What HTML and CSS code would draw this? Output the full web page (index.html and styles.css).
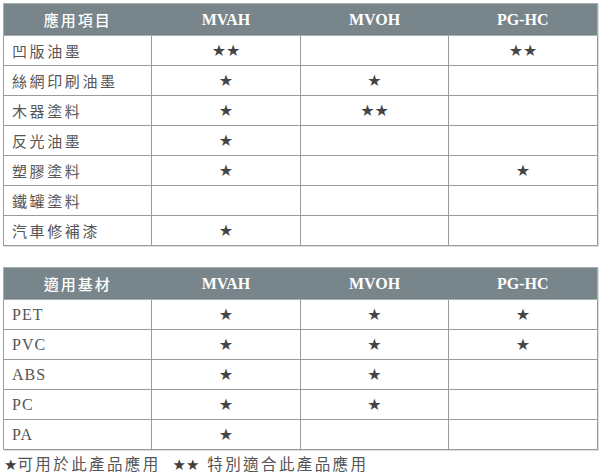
FILE: index.html
```html
<!DOCTYPE html>
<html lang="zh-Hant">
<head>
<meta charset="utf-8">
<title>應用項目</title>
<link rel="stylesheet" href="styles.css">
</head>
<body>
<div class="page">
  <table class="grid">
    <colgroup><col class="c1"><col class="c2"><col class="c3"><col class="c4"></colgroup>
    <thead>
      <tr><th class="zh">應用項目</th><th>MVAH</th><th>MVOH</th><th>PG-HC</th></tr>
    </thead>
    <tbody>
      <tr><td class="zh">凹版油墨</td><td class="star">★★</td><td class="star"></td><td class="star">★★</td></tr>
      <tr><td class="zh">絲網印刷油墨</td><td class="star">★</td><td class="star">★</td><td class="star"></td></tr>
      <tr><td class="zh">木器塗料</td><td class="star">★</td><td class="star">★★</td><td class="star"></td></tr>
      <tr><td class="zh">反光油墨</td><td class="star">★</td><td class="star"></td><td class="star"></td></tr>
      <tr><td class="zh">塑膠塗料</td><td class="star">★</td><td class="star"></td><td class="star">★</td></tr>
      <tr><td class="zh">鐵罐塗料</td><td class="star"></td><td class="star"></td><td class="star"></td></tr>
      <tr><td class="zh">汽車修補漆</td><td class="star">★</td><td class="star"></td><td class="star"></td></tr>
    </tbody>
  </table>

  <table class="grid second">
    <colgroup><col class="c1"><col class="c2"><col class="c3"><col class="c4"></colgroup>
    <thead>
      <tr><th class="zh">適用基材</th><th>MVAH</th><th>MVOH</th><th>PG-HC</th></tr>
    </thead>
    <tbody>
      <tr><td class="en">PET</td><td class="star">★</td><td class="star">★</td><td class="star">★</td></tr>
      <tr><td class="en">PVC</td><td class="star">★</td><td class="star">★</td><td class="star">★</td></tr>
      <tr><td class="en">ABS</td><td class="star">★</td><td class="star">★</td><td class="star"></td></tr>
      <tr><td class="en">PC</td><td class="star">★</td><td class="star">★</td><td class="star"></td></tr>
      <tr><td class="en">PA</td><td class="star">★</td><td class="star"></td><td class="star"></td></tr>
    </tbody>
  </table>

  <p class="legend"><span class="lstar">★</span>可用於此產品應用 <span class="lstar two">★★</span> 特別適合此產品應用</p>
</div>
</body>
</html>
```

FILE: styles.css
```css
html, body {
  margin: 0;
  padding: 0;
  background: #ffffff;
}

.page {
  padding: 3px 0 0 3px;
  width: 594px;
}

.grid {
  width: 594px;
  border-collapse: collapse;
  table-layout: fixed;
  box-shadow: 1px 1px 0 #dcdcdc;
}

.grid .c1 { width: 148px; }
.grid .c2 { width: 149px; }
.grid .c3 { width: 148px; }
.grid .c4 { width: 149px; }

.second {
  margin-top: 21px;
}

.grid th {
  height: 31px;
  padding: 0;
  background: #78858a;
  color: #ffffff;
  font-family: "Liberation Serif", serif;
  font-weight: bold;
  font-size: 16px;
  text-align: center;
  vertical-align: middle;
  border: 1px solid #a9b0b2;
  border-left: 0;
  border-right: 0;
}

.grid th:first-child { border-left: 1px solid #a9b0b2; }
.grid th:last-child { border-right: 1px solid #a9b0b2; }

.grid th.zh {
  font-family: "Noto Sans CJK TC", "Noto Sans", sans-serif;
  font-weight: 500;
  font-size: 15px;
  letter-spacing: 2px;
}

.grid td {
  height: 29px;
  padding: 0;
  border: 1px solid #9b9b9b;
  vertical-align: middle;
  color: #555555;
}

.grid td.zh {
  padding-left: 8px;
  font-family: "Noto Sans CJK TC", "Noto Sans", sans-serif;
  font-size: 15px;
  letter-spacing: 2.6px;
}

.grid td.en {
  padding-left: 8px;
  font-family: "Liberation Serif", serif;
  font-size: 16px;
  letter-spacing: 1px;
}

.grid td.star {
  text-align: center;
  font-family: "DejaVu Sans", sans-serif;
  font-size: 16px;
  color: #454545;
}

.legend {
  margin: 3px 0 0 1px;
  font-family: "Noto Sans CJK TC", "Noto Sans", sans-serif;
  font-size: 15.5px;
  letter-spacing: 2.4px;
  color: #555555;
  line-height: 20px;
  white-space: nowrap;
}

.lstar {
  font-family: "DejaVu Sans", sans-serif;
  font-size: 15px;
  letter-spacing: 0;
  color: #3f3f3f;
}

.lstar.two {
  margin-left: 6px;
  margin-right: 2px;
}
```
